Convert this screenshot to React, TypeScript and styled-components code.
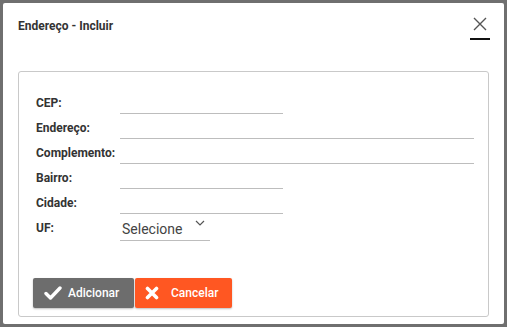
import React from "react";
import styled, { createGlobalStyle } from "styled-components";

const Global = createGlobalStyle`
  html, body { margin: 0; padding: 0; background: #6f6f6f; }
  body { font-family: Roboto, "Liberation Sans", Arial, sans-serif; }
  * { box-sizing: border-box; }
`;

const Overlay = styled.div`
  width: 507px;
  height: 327px;
  padding: 3px;
  background: #6f6f6f;
`;

const Dialog = styled.div`
  width: 501px;
  height: 321px;
  background: #fff;
  border-radius: 2px;
  padding: 0 15px;
  display: flex;
  flex-direction: column;
`;

const Header = styled.div`
  height: 68px;
  display: flex;
  align-items: flex-start;
  justify-content: space-between;
`;

const Title = styled.h1`
  margin: 0;
  padding-top: 15px;
  font-size: 12px;
  line-height: 16px;
  font-weight: 700;
  color: #333;
`;

const CloseButton = styled.button`
  margin: 12px -1px 0 0;
  width: 20px;
  height: 25px;
  padding: 0;
  border: none;
  border-bottom: 2px solid #111;
  background: transparent;
  display: flex;
  align-items: flex-start;
  justify-content: center;
  padding-top: 2px;
`;

const Panel = styled.div`
  height: 246px;
  border: 1px solid #c9c9c9;
  border-radius: 3px;
  padding: 17px 14px 7px;
  display: flex;
  flex-direction: column;
`;

const Form = styled.div`
  display: flex;
  flex-direction: column;
  padding-left: 3px;
`;

const Row = styled.div`
  display: grid;
  grid-template-columns: 84px 1fr;
  align-items: center;
  height: 25px;
`;

const Label = styled.label`
  font-size: 12px;
  font-weight: 700;
  color: #333;
  position: relative;
  top: 1px;
`;

const Input = styled.div<{ $w: number }>`
  width: ${(p) => p.$w}px;
  height: 25px;
  border-bottom: 1px solid #bdbdbd;
`;

const Select = styled.div`
  width: 90px;
  height: 26px;
  border-bottom: 1px solid #bdbdbd;
  display: flex;
  align-items: flex-end;
  justify-content: space-between;
  padding: 0 0 3px 2px;
  position: relative;
  top: 1px;
  font-size: 14px;
  color: #444;
`;

const Chevron = styled.svg`
  position: absolute;
  right: 5px;
  top: 5px;
`;

const Actions = styled.div`
  margin-top: auto;
  display: flex;
  gap: 1px;
  position: relative;
  top: -1px;
`;

const Btn = styled.button<{ $bg: string; $w: number }>`
  width: ${(p) => p.$w}px;
  height: 30px;
  border: none;
  border-radius: 2px;
  background: ${(p) => p.$bg};
  color: #fff;
  font-family: Roboto, "Liberation Sans", Arial, sans-serif;
  font-size: 12px;
  font-weight: 500;
  display: flex;
  align-items: center;
  padding: 0 0 0 ${(p) => (p.$w > 100 ? 11 : 10)}px;
  gap: ${(p) => (p.$w > 100 ? 6 : 12)}px;
  box-shadow: 0 1px 2px rgba(0,0,0,0.25);
`;

export default function App() {
  return (
    <>
      <Global />
      <Overlay>
        <Dialog>
          <Header>
            <Title>Endereço - Incluir</Title>
            <CloseButton aria-label="Fechar">
              <svg width="14" height="14" viewBox="0 0 14 14">
                <path d="M1 1L13 13M13 1L1 13" stroke="#555" strokeWidth="1.4" fill="none" />
              </svg>
            </CloseButton>
          </Header>
          <Panel>
            <Form>
              <Row>
                <Label>CEP:</Label>
                <Input $w={163} />
              </Row>
              <Row>
                <Label>Endereço:</Label>
                <Input $w={354} />
              </Row>
              <Row>
                <Label>Complemento:</Label>
                <Input $w={354} />
              </Row>
              <Row>
                <Label>Bairro:</Label>
                <Input $w={163} />
              </Row>
              <Row>
                <Label>Cidade:</Label>
                <Input $w={163} />
              </Row>
              <Row>
                <Label>UF:</Label>
                <Select>
                  Selecione
                  <Chevron width="10" height="6" viewBox="0 0 10 6">
                    <path d="M1 1L5 5L9 1" stroke="#555" strokeWidth="1.2" fill="none" />
                  </Chevron>
                </Select>
              </Row>
            </Form>
            <Actions>
              <Btn $bg="#6d6d6d" $w={101}>
                <svg width="18" height="14" viewBox="0 0 18 14">
                  <path d="M2 7.5L6.5 12L16 2" stroke="#fff" strokeWidth="3.4" fill="none" strokeLinecap="round" strokeLinejoin="round" />
                </svg>
                Adicionar
              </Btn>
              <Btn $bg="#ff5722" $w={97}>
                <svg width="14" height="14" viewBox="0 0 14 14">
                  <path d="M2.5 2.5L11.5 11.5M11.5 2.5L2.5 11.5" stroke="#fff" strokeWidth="3.6" fill="none" strokeLinecap="round" />
                </svg>
                Cancelar
              </Btn>
            </Actions>
          </Panel>
        </Dialog>
      </Overlay>
    </>
  );
}
